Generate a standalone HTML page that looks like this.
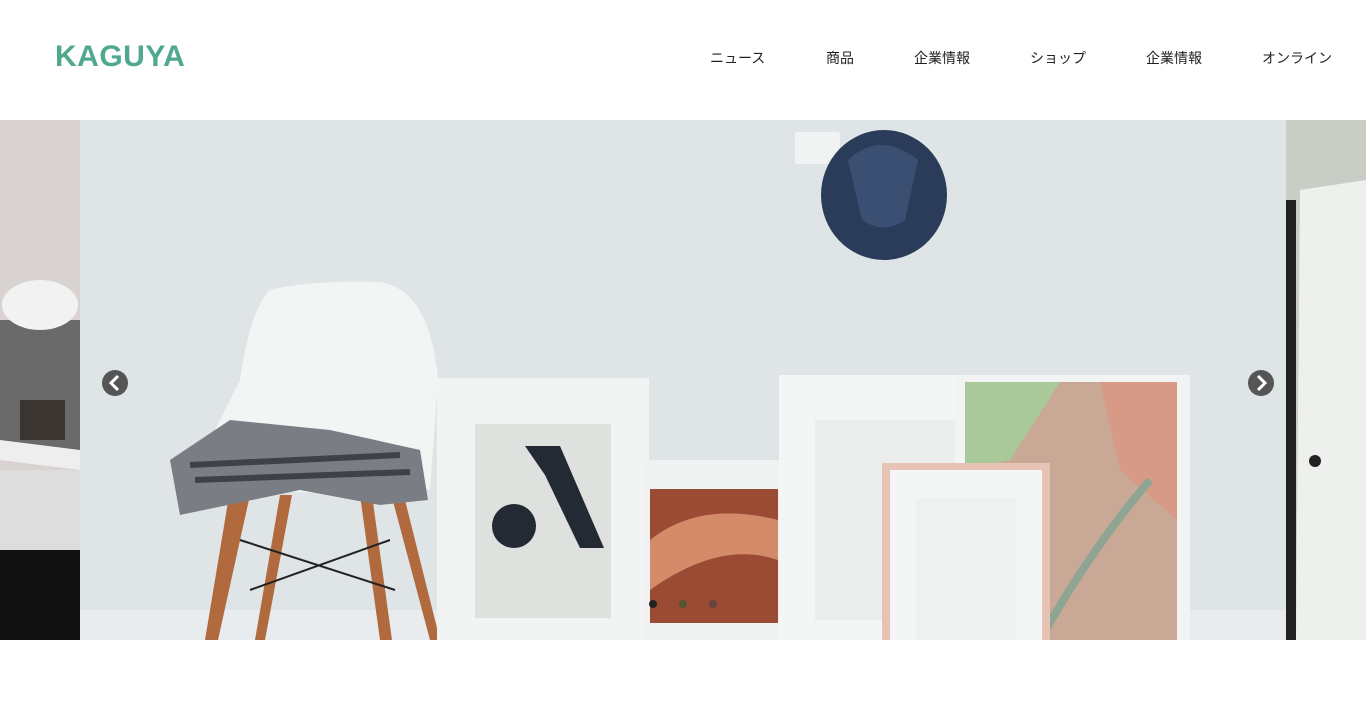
<!DOCTYPE html>
<html><head><meta charset="utf-8"><style>
body{margin:0;width:1366px;height:701px;background:#fff;overflow:hidden;font-family:"Liberation Sans","Noto Sans CJK JP",sans-serif;position:relative}
.logo{position:absolute;left:55px;top:40px;font-size:30px;font-weight:bold;color:#4fa88f;letter-spacing:0.5px}
.nav{position:absolute;top:48px;font-size:14px;color:#222}
.ab{position:absolute}
</style></head><body>
<div class="logo">KAGUYA</div>
<div class="nav" style="left:710px">ニュース</div>
<div class="nav" style="left:826px">商品</div>
<div class="nav" style="left:914px">企業情報</div>
<div class="nav" style="left:1030px">ショップ</div>
<div class="nav" style="left:1146px">企業情報</div>
<div class="nav" style="left:1262px">オンライン</div>

<svg class="ab" style="left:0;top:120px" width="1366" height="520" viewBox="0 0 1366 520">
<rect x="0" y="0" width="80" height="520" fill="#d8d2d0"/>
<rect x="0" y="200" width="80" height="130" fill="#6a6a6a"/>
<path d="M0 320 L80 330 L80 350 L0 340Z" fill="#eee"/>
<rect x="0" y="350" width="80" height="80" fill="#ddd"/>
<rect x="0" y="430" width="80" height="90" fill="#111"/>
<ellipse cx="40" cy="185" rx="38" ry="25" fill="#f2f2f2"/>
<rect x="20" y="280" width="45" height="40" fill="#3a3530"/>
<rect x="1286" y="0" width="80" height="520" fill="#c9cdc6"/>
<rect x="1286" y="80" width="10" height="440" fill="#222"/>
<path d="M1300 70 L1366 60 L1366 520 L1296 520Z" fill="#eef0ee"/>
<circle cx="1315" cy="341" r="6" fill="#222"/>
<rect x="80" y="0" width="1206" height="520" fill="#dfe5e7"/>
<rect x="80" y="490" width="1206" height="30" fill="#e8ecee"/>
<rect x="795" y="12" width="45" height="32" rx="3" fill="#f1f3f3"/>
<ellipse cx="884" cy="75" rx="63" ry="65" fill="#2a3c5a"/>
<path d="M848 40 Q880 10 918 40 L905 100 Q884 115 862 100Z" fill="#3b4f72"/>
<path d="M270 170 Q310 160 380 162 Q430 170 438 260 L430 370 Q300 380 190 360 L240 260 Q250 190 270 170Z" fill="#f3f5f5"/>
<path d="M230 370 L205 520 L218 520 L250 375Z M360 375 L380 520 L392 520 L372 375Z M390 370 L430 520 L440 520 L402 368Z M280 375 L255 520 L265 520 L292 375Z" fill="#b06a3e"/>
<path d="M240 420 L395 470 M250 470 L390 420" stroke="#222" stroke-width="2"/>
<path d="M170 340 L230 300 L330 310 L420 330 L428 380 L380 385 L300 370 L180 395Z" fill="#7a7d84"/>
<path d="M190 345 L400 335 M195 360 L410 352" stroke="#3e4148" stroke-width="6"/>
<rect x="437" y="258" width="212" height="262" fill="#f2f4f4"/>
<rect x="475" y="304" width="136" height="194" fill="#dfe1df"/>
<circle cx="514" cy="406" r="22" fill="#232a33"/>
<path d="M525 326 L560 326 L604 428 L580 428 L545 355 Z" fill="#232a33"/>
<rect x="645" y="340" width="140" height="180" fill="#f0f2f2"/>
<rect x="650" y="369" width="128" height="134" fill="#9b4a34"/>
<path d="M650 420 Q700 380 778 400 L778 440 Q720 420 650 470Z" fill="#d48b6a"/>
<circle cx="653" cy="484" r="4" fill="#222"/>
<rect x="779" y="255" width="180" height="265" fill="#f4f6f6"/>
<rect x="815" y="300" width="140" height="200" fill="#eceeee"/>
<rect x="955" y="255" width="235" height="265" fill="#f2f3f3"/>
<rect x="965" y="262" width="212" height="258" fill="#c9a896"/>
<path d="M965 262 L1060 262 L1010 340 L965 350Z" fill="#a9c99a"/>
<path d="M1100 262 L1177 262 L1177 400 L1120 350Z" fill="#d69a86"/>
<path d="M1040 520 Q1090 430 1150 360" stroke="#8ea594" stroke-width="8" fill="none"/>
<rect x="882" y="343" width="168" height="177" fill="#e7c3b6"/>
<rect x="890" y="350" width="152" height="170" fill="#f4f6f6"/>
<rect x="916" y="378" width="100" height="142" fill="#eff1f1"/>
<circle cx="115" cy="263" r="13" fill="#555"/>
<path d="M118 256 L111 263 L118 270" stroke="#fff" stroke-width="3" fill="none"/>
<circle cx="1261" cy="263" r="13" fill="#555"/>
<path d="M1258 256 L1265 263 L1258 270" stroke="#fff" stroke-width="3" fill="none"/>
<circle cx="683" cy="484" r="4" fill="#553"/>
<circle cx="713" cy="484" r="4" fill="#644"/>
</svg>
</body></html>
